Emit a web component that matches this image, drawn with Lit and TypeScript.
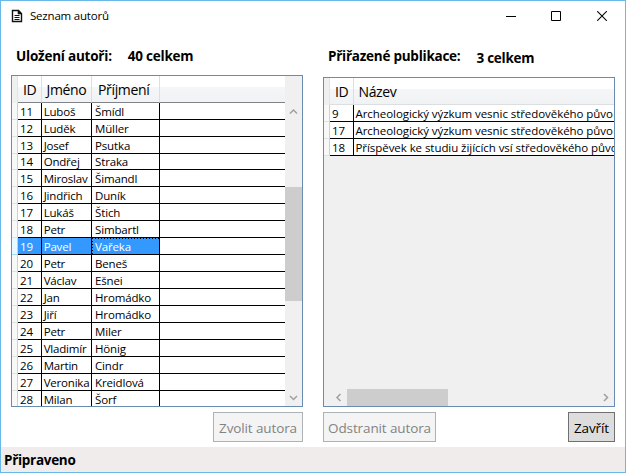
import { LitElement, html, css, svg } from "lit";
import { customElement, property } from "lit/decorators.js";
import { classMap } from "lit/directives/class-map.js";

type Row = string[];

const authors: Row[] = [
  ["11", "Luboš", "Šmídl"],
  ["12", "Luděk", "Müller"],
  ["13", "Josef", "Psutka"],
  ["14", "Ondřej", "Straka"],
  ["15", "Miroslav", "Šimandl"],
  ["16", "Jindřich", "Duník"],
  ["17", "Lukáš", "Štich"],
  ["18", "Petr", "Simbartl"],
  ["19", "Pavel", "Vařeka"],
  ["20", "Petr", "Beneš"],
  ["21", "Václav", "Ešnei"],
  ["22", "Jan", "Hromádko"],
  ["23", "Jiří", "Hromádko"],
  ["24", "Petr", "Miler"],
  ["25", "Vladimír", "Hönig"],
  ["26", "Martin", "Cindr"],
  ["27", "Veronika", "Kreidlová"],
  ["28", "Milan", "Šorf"],
];

const publications: Row[] = [
  ["9", "Archeologický výzkum vesnic středověkého půvo"],
  ["17", "Archeologický výzkum vesnic středověkého půvo"],
  ["18", "Příspěvek ke studiu žijících vsí středověkého půvo"],
];

const chevrons: Record<string, string> = {
  up: "M1 6.5 L4.5 3 L8 6.5",
  down: "M1 3 L4.5 6.5 L8 3",
  left: "M6.5 1 L3 4.5 L6.5 8",
  right: "M3 1 L6.5 4.5 L3 8",
};

const chevron = (dir: string) => html`<svg width="9" height="9" viewBox="0 0 9 9">
  ${svg`<path d=${chevrons[dir]} fill="none" stroke="#a0a0a0" stroke-width="1.5"/>`}
</svg>`;

@customElement("data-grid")
export class DataGrid extends LitElement {
  @property({ attribute: false }) heads: string[] = [];
  @property({ attribute: false }) rows: Row[] = [];
  @property({ type: Number }) selected = -1;
  @property({ type: Number }) shortRow = -1;

  static styles = css`
    :host {
      display: block;
      min-width: 0;
      overflow: hidden;
      background: #f0f0f0;
    }
    .row {
      display: grid;
      grid-template-columns: var(--cols);
      height: 17px;
      font-size: 11.5px;
      letter-spacing: -0.14px;
      line-height: 17px;
    }
    .row.short {
      height: 16px;
      line-height: 16px;
    }
    .cell {
      box-sizing: border-box;
      border-right: 1px solid #000;
      border-bottom: 1px solid #000;
      background: #fff;
      padding-left: 2px;
      white-space: nowrap;
      overflow: hidden;
    }
    .cell:nth-child(3) {
      padding-left: 1.7px;
      letter-spacing: -0.2px;
    }
    .cell:nth-child(4) {
      padding-left: 3px;
    }
    .cell.wide:nth-child(3) {
      padding-left: 1.5px;
      letter-spacing: -0.06px;
    }
    .cell:last-child {
      border-right: 0;
    }
    .cell.on {
      background: #3399ff;
      color: #fff;
    }
    .cell.on.focus {
      background-image: repeating-linear-gradient(90deg, #000 0 1px, transparent 1px 3px),
        repeating-linear-gradient(180deg, #000 0 1px, transparent 1px 3px);
      background-size: 100% 1px, 1px 100%;
      background-repeat: no-repeat;
    }
    .grip {
      box-sizing: border-box;
      border-right: 1px solid #d0d0d0;
      border-bottom: 1px solid #e2e2e2;
      background: #f8f8f8;
    }
    .grip.on {
      background: #eaf8ff;
      border-bottom-color: #9ddcf5;
      border-right-color: #9ddcf5;
    }
    .head {
      height: 27px;
      line-height: 28px;
      font-size: 14px;
      letter-spacing: -0.35px;
    }
    .head .cell {
      border-right: 1px solid #dcdfe2;
      border-bottom: 1px solid var(--head-line);
      background: linear-gradient(#fff 0 42%, #f5f6f8 42%, #f1f2f4);
      padding-left: 5px;
    }
    .head .cell:nth-child(3) {
      padding-left: 4.5px;
      letter-spacing: -0.35px;
    }
    .head .cell:nth-child(4) {
      padding-left: 6px;
    }
    .head .cell:last-child {
      border-right: 0;
    }
    .head .grip {
      background: #f0f0f0;
      border-right-color: #e4e4e4;
      border-bottom: 0;
    }
  `;

  render() {
    const wide = this.heads.length === 2;
    return html`
      <div class="row head">
        <div class="grip"></div>
        ${this.heads.map((h) => html`<div class="cell">${h}</div>`)}
      </div>
      ${this.rows.map((r, i) => {
        const on = i === this.selected;
        return html`<div class=${classMap({ row: true, short: i === this.shortRow })}>
          <div class=${classMap({ grip: true, on })}></div>
          ${this.heads.map(
            (_, c) =>
              html`<div class=${classMap({ cell: true, wide, on: on && c < 3, focus: on && c === 2 })}>${r[c] ?? ""}</div>`
          )}
        </div>`;
      })}
    `;
  }
}

@customElement("app-root")
export class AppRoot extends LitElement {
  static styles = css`
    :host {
      display: flex;
      flex-direction: column;
      box-sizing: border-box;
      width: 626px;
      height: 473px;
      border: 1px solid #69b8ea;
      background: #fff;
      color: #000;
      font-family: "Open Sans", "Noto Sans", sans-serif;
      overflow: hidden;
    }
    svg {
      display: block;
    }
    .titlebar {
      display: flex;
      flex: none;
      align-items: center;
      height: 29px;
      padding: 0 17px 0 10px;
      font-size: 11.5px;
      letter-spacing: -0.2px;
    }
    .titlebar .name {
      margin-left: 7px;
      flex: 1;
    }
    .controls {
      display: flex;
      gap: 35px;
    }
    .controls .x {
      margin-left: 1px;
    }
    .main {
      display: grid;
      flex: none;
      grid-template-columns: 292px 292px;
      column-gap: 20px;
      padding-left: 10px;
      height: 417px;
    }
    .col {
      display: flex;
      flex-direction: column;
      min-width: 0;
    }
    .caption {
      display: flex;
      height: 45px;
      box-sizing: border-box;
      padding: 16px 0 0 5px;
      font-size: 13.5px;
      font-weight: 700;
      line-height: 20px;
      letter-spacing: -0.22px;
      white-space: nowrap;
    }
    .caption .count {
      margin-left: 16px;
    }
    .right .caption {
      height: 47px;
      letter-spacing: -0.25px;
    }
    .right .count {
      padding-top: 2px;
    }
    .panel {
      box-sizing: border-box;
      display: flex;
      height: 332px;
      border: 1px solid #688caf;
      background: #f0f0f0;
      overflow: hidden;
    }
    .left data-grid {
      width: 273px;
      --cols: 6px 24px 50px 68px 125px;
      --head-line: #808488;
    }
    .right .panel {
      height: 330px;
      flex-direction: column;
    }
    .right data-grid {
      flex: 1;
      --cols: 6px 24px 260px;
      --head-line: #dcdfe2;
    }
    .vbar {
      display: flex;
      flex-direction: column;
      align-items: center;
      width: 17px;
      box-sizing: border-box;
      padding: 31px 0 4px;
    }
    .vbar .thumb {
      width: 17px;
      height: 114px;
      margin: 71px 0 auto;
      background: #cdcdcd;
    }
    .hbar {
      display: flex;
      align-items: center;
      height: 17px;
      padding: 0 4px 0 10px;
    }
    .hbar .thumb {
      width: 101px;
      height: 17px;
      margin: 0 auto 0 4px;
      background: #cdcdcd;
    }
    .actions {
      display: flex;
      justify-content: space-between;
      margin-top: 5px;
    }
    .left .actions {
      justify-content: flex-end;
    }
    button {
      box-sizing: border-box;
      height: 30px;
      padding: 2px 0 0;
      border: 1px solid #707070;
      background: #ddd;
      color: #000;
      font-family: inherit;
      font-size: 13.5px;
      line-height: 26px;
      letter-spacing: -0.12px;
      white-space: nowrap;
    }
    button:disabled {
      border-color: #adb2b5;
      background: #f4f4f4;
      color: #838383;
    }
    .choose {
      width: 90px;
    }
    .remove {
      width: 113px;
    }
    .close {
      width: 47px;
    }
    .status {
      flex: 1;
      min-height: 0;
      background: #f0eceb;
      padding-left: 3px;
      font-size: 13.5px;
      font-weight: 700;
      line-height: 27px;
      letter-spacing: -0.3px;
    }
  `;

  render() {
    return html`
      <div class="titlebar">
        <svg width="12" height="14" viewBox="0 0 12 14">
          <path d="M1.5 1.5H7.5L10.5 4.5V12.5H1.5Z" fill="#fff" stroke="#111" stroke-width="1.4" />
          <path d="M7 1V5H11" fill="#111" stroke="#111" stroke-width=".6" />
          <path d="M3.5 6.5H8.5M3.5 8.5H8.5M3.5 10.5H8.5" stroke="#111" />
        </svg>
        <span class="name">Seznam autorů</span>
        <div class="controls">
          <svg width="10" height="10" viewBox="0 0 10 10"><path d="M0 5.5H10" stroke="#000" /></svg>
          <svg width="10" height="10" viewBox="0 0 10 10">
            <path d="M.5 .5H9.5V9.5H.5Z" fill="none" stroke="#000" />
          </svg>
          <svg class="x" width="11" height="10" viewBox="0 0 11 10">
            <path d="M.2 .2L9.8 9.8M9.8 .2L.2 9.8" stroke="#000" stroke-width="1.1" />
          </svg>
        </div>
      </div>
      <div class="main">
        <section class="col left">
          <div class="caption"><span>Uložení autoři:</span><span class="count">40 celkem</span></div>
          <div class="panel">
            <data-grid
              .heads=${["ID", "Jméno", "Příjmení", ""]}
              .rows=${authors}
              .selected=${8}
              .shortRow=${3}
            ></data-grid>
            <div class="vbar">${chevron("up")}<div class="thumb"></div>${chevron("down")}</div>
          </div>
          <div class="actions"><button class="choose" disabled>Zvolit autora</button></div>
        </section>
        <section class="col right">
          <div class="caption"><span>Přiřazené publikace:</span><span class="count">3 celkem</span></div>
          <div class="panel">
            <data-grid .heads=${["ID", "Název"]} .rows=${publications}></data-grid>
            <div class="hbar">${chevron("left")}<div class="thumb"></div>${chevron("right")}</div>
          </div>
          <div class="actions">
            <button class="remove" disabled>Odstranit autora</button>
            <button class="close">Zavřít</button>
          </div>
        </section>
      </div>
      <div class="status">Připraveno</div>
    `;
  }
}
